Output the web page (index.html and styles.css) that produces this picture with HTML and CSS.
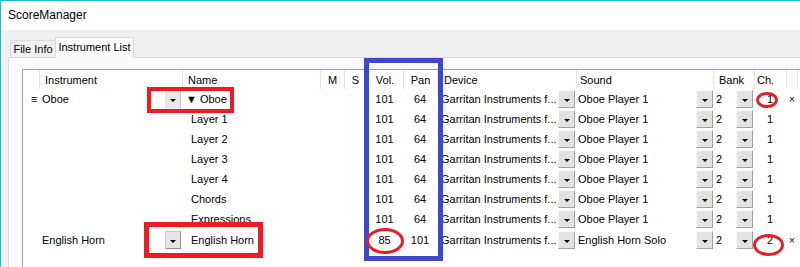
FILE: index.html
```html
<!DOCTYPE html>
<html lang="en">
<head>
    <meta charset="UTF-8">
    <title>ScoreManager</title>
    <link rel="stylesheet" href="styles.css">
</head>
<body>
    <div class="window">
        <div class="titlebar">ScoreManager</div>
        <div class="client">
            <div class="tabs">
                <div class="tab">File Info</div>
                <div class="tab active">Instrument List</div>
            </div>
            <div class="panel">
                <div class="list">
                    <div class="row head">
                        <div></div>
                        <div>Instrument</div>
                        <div>Name</div>
                        <div class="c">M</div>
                        <div class="c">S</div>
                        <div class="c">Vol.</div>
                        <div class="c">Pan</div>
                        <div class="dev">Device</div>
                        <div class="snd">Sound</div>
                        <div>Bank</div>
                        <div class="ch">Ch.</div>
                        <div></div>
                        <div></div>
                    </div>

                    <div class="row">
                        <div class="handle">&#8801;</div>
                        <div class="inst">Oboe<span class="drop flat"></span></div>
                        <div class="name">&#9660; Oboe</div>
                        <div></div><div></div>
                        <div class="c">101</div>
                        <div class="c">64</div>
                        <div class="dev"><span class="txt">Garritan Instruments f...</span><span class="drop"></span></div>
                        <div class="snd"><span class="txt">Oboe Player 1</span><span class="drop"></span></div>
                        <div class="bank">2<span class="drop"></span></div>
                        <div class="c">1</div>
                        <div class="del">&times;</div>
                        <div></div>
                    </div>
                    <div class="row">
                        <div></div><div></div>
                        <div class="name sub">Layer 1</div>
                        <div></div><div></div>
                        <div class="c">101</div>
                        <div class="c">64</div>
                        <div class="dev"><span class="txt">Garritan Instruments f...</span><span class="drop"></span></div>
                        <div class="snd"><span class="txt">Oboe Player 1</span><span class="drop"></span></div>
                        <div class="bank">2<span class="drop"></span></div>
                        <div class="c">1</div>
                        <div></div><div></div>
                    </div>
                    <div class="row">
                        <div></div><div></div>
                        <div class="name sub">Layer 2</div>
                        <div></div><div></div>
                        <div class="c">101</div>
                        <div class="c">64</div>
                        <div class="dev"><span class="txt">Garritan Instruments f...</span><span class="drop"></span></div>
                        <div class="snd"><span class="txt">Oboe Player 1</span><span class="drop"></span></div>
                        <div class="bank">2<span class="drop"></span></div>
                        <div class="c">1</div>
                        <div></div><div></div>
                    </div>
                    <div class="row">
                        <div></div><div></div>
                        <div class="name sub">Layer 3</div>
                        <div></div><div></div>
                        <div class="c">101</div>
                        <div class="c">64</div>
                        <div class="dev"><span class="txt">Garritan Instruments f...</span><span class="drop"></span></div>
                        <div class="snd"><span class="txt">Oboe Player 1</span><span class="drop"></span></div>
                        <div class="bank">2<span class="drop"></span></div>
                        <div class="c">1</div>
                        <div></div><div></div>
                    </div>
                    <div class="row">
                        <div></div><div></div>
                        <div class="name sub">Layer 4</div>
                        <div></div><div></div>
                        <div class="c">101</div>
                        <div class="c">64</div>
                        <div class="dev"><span class="txt">Garritan Instruments f...</span><span class="drop"></span></div>
                        <div class="snd"><span class="txt">Oboe Player 1</span><span class="drop"></span></div>
                        <div class="bank">2<span class="drop"></span></div>
                        <div class="c">1</div>
                        <div></div><div></div>
                    </div>
                    <div class="row">
                        <div></div><div></div>
                        <div class="name sub">Chords</div>
                        <div></div><div></div>
                        <div class="c">101</div>
                        <div class="c">64</div>
                        <div class="dev"><span class="txt">Garritan Instruments f...</span><span class="drop"></span></div>
                        <div class="snd"><span class="txt">Oboe Player 1</span><span class="drop"></span></div>
                        <div class="bank">2<span class="drop"></span></div>
                        <div class="c">1</div>
                        <div></div><div></div>
                    </div>
                    <div class="row">
                        <div></div><div></div>
                        <div class="name sub">Expressions</div>
                        <div></div><div></div>
                        <div class="c">101</div>
                        <div class="c">64</div>
                        <div class="dev"><span class="txt">Garritan Instruments f...</span><span class="drop"></span></div>
                        <div class="snd"><span class="txt">Oboe Player 1</span><span class="drop"></span></div>
                        <div class="bank">2<span class="drop"></span></div>
                        <div class="c">1</div>
                        <div></div><div></div>
                    </div>
                    <div class="row last">
                        <div></div>
                        <div class="inst">English Horn<span class="drop"></span></div>
                        <div class="name sub">English Horn</div>
                        <div></div><div></div>
                        <div class="c">85</div>
                        <div class="c">101</div>
                        <div class="dev"><span class="txt">Garritan Instruments f...</span><span class="drop"></span></div>
                        <div class="snd"><span class="txt">English Horn Solo</span><span class="drop"></span></div>
                        <div class="bank">2<span class="drop"></span></div>
                        <div class="c">2</div>
                        <div class="del">&times;</div>
                        <div></div>
                    </div>
                </div>
            </div>
        </div>

        <!-- annotations drawn over the screenshot -->
        <div class="mark blue vol-pan"></div>
        <div class="mark red box-oboe"></div>
        <div class="mark red box-horn"></div>
        <div class="mark ring ring-vol"></div>
        <div class="mark ring ring-ch1"></div>
        <div class="mark ring ring-ch2"></div>
    </div>
</body>
</html>
```

FILE: styles.css
```css
body {
    margin: 0;
    font-family: "Liberation Sans", Arial, sans-serif;
    font-size: 11px;
    color: #000;
}
.window {
    position: relative;
    width: 800px;
    height: 267px;
    overflow: hidden;
    box-sizing: border-box;
    border-top: 1px solid #26b8c8;
    border-left: 1px solid #26b8c8;
    background-color: #f0f0f0;
}
.titlebar {
    height: 29px;
    line-height: 29px;
    padding-left: 7px;
    background-color: #fff;
    font-size: 12px;
}
.tabs {
    display: flex;
    align-items: flex-end;
    height: 27px;
    padding-left: 9px;
}
.tab {
    box-sizing: border-box;
    width: 46px;
    height: 17px;
    line-height: 16px;
    text-align: center;
    border: 1px solid #d9d9d9;
    border-bottom: none;
    background-color: #f0f0f0;
}
.tab.active {
    position: relative;
    z-index: 1;
    width: 79px;
    height: 21px;
    line-height: 19px;
    margin-left: -1px;
    margin-bottom: -1px;
    background-color: #fafafa;
}
.panel {
    margin-left: 7px;
    height: 300px;
    padding: 11px 0 0 13px;
    border-top: 1px solid #d9d9d9;
    border-left: 1px solid #d9d9d9;
    background-color: #fafafa;
}
.list {
    width: 900px;
    height: 300px;
    border-top: 1px solid #a0a0a0;
    border-left: 1px solid #a0a0a0;
    background-color: #fff;
}
.row {
    display: grid;
    grid-template-columns: 16px 143px 138px 24px 22px 37px 34px 139px 137px 41px 32px 11px 1fr;
    height: 20px;
}
.row > div {
    display: flex;
    align-items: center;
    box-sizing: border-box;
    white-space: nowrap;
    overflow: hidden;
}
.row.last {
    margin-top: 1px;
}
.head {
    height: 19px;
}
.head > div {
    padding-left: 5px;
    border-left: 1px solid #e5e5e5;
}
.head > div:first-child {
    border-left: none;
}
.head > .c {
    justify-content: center;
    padding-left: 0;
}
.head > .dev {
    padding-left: 6px;
}
.head > .snd {
    padding-left: 3px;
}
.head > .ch {
    padding-left: 2px;
}
.row > .c {
    justify-content: center;
}
.handle {
    padding-left: 8px;
}
.inst {
    justify-content: space-between;
    padding-left: 3px;
    padding-right: 1px;
}
.name {
    padding-left: 4px;
}
.name.sub {
    padding-left: 9px;
}
.dev {
    justify-content: space-between;
    padding-left: 4px;
    padding-right: 1px;
}
.snd {
    justify-content: space-between;
    padding-left: 2px;
}
.bank {
    justify-content: space-between;
    padding-left: 3px;
    padding-right: 1px;
}
.del {
    padding-left: 3px;
    font-size: 10px;
}
.txt {
    overflow: hidden;
}
.drop {
    display: flex;
    align-items: center;
    justify-content: center;
    flex: none;
    box-sizing: border-box;
    width: 17px;
    height: 18px;
    padding-top: 2px;
    background-color: #e3e3e3;
    border: 1px solid;
    border-color: #f8f8f8 #a0a0a0 #a0a0a0 #f8f8f8;
}
.inst .drop {
    width: 16px;
    border-color: #c8c8c8 #8e8e8e #8e8e8e #c8c8c8;
    background-color: #e6e6e6;
}
.inst .drop.flat {
    height: 20px;
    border: none;
    border-right: 1px solid #c8c8c8;
    background-color: #e8e8e8;
}
.drop::after {
    content: "";
    border-left: 3px solid transparent;
    border-right: 3px solid transparent;
    border-top: 3px solid #000;
}
.mark {
    position: absolute;
    box-sizing: border-box;
}
.blue {
    border: 5px solid #3f48cc;
}
.red {
    border: 4px solid #ed1c24;
}
.ring {
    border: 3px solid #ed1c24;
    border-radius: 50%;
}
.vol-pan {
    left: 363px;
    top: 57px;
    width: 79px;
    height: 203px;
}
.box-oboe {
    left: 146px;
    top: 86px;
    width: 87px;
    height: 26px;
}
.box-horn {
    left: 143px;
    top: 221px;
    width: 119px;
    height: 36px;
    border-width: 5px;
}
.ring-vol {
    left: 365px;
    top: 227px;
    width: 38px;
    height: 26px;
}
.ring-ch1 {
    left: 755px;
    top: 91px;
    width: 22px;
    height: 16px;
}
.ring-ch2 {
    left: 752px;
    top: 233px;
    width: 31px;
    height: 22px;
}
```
